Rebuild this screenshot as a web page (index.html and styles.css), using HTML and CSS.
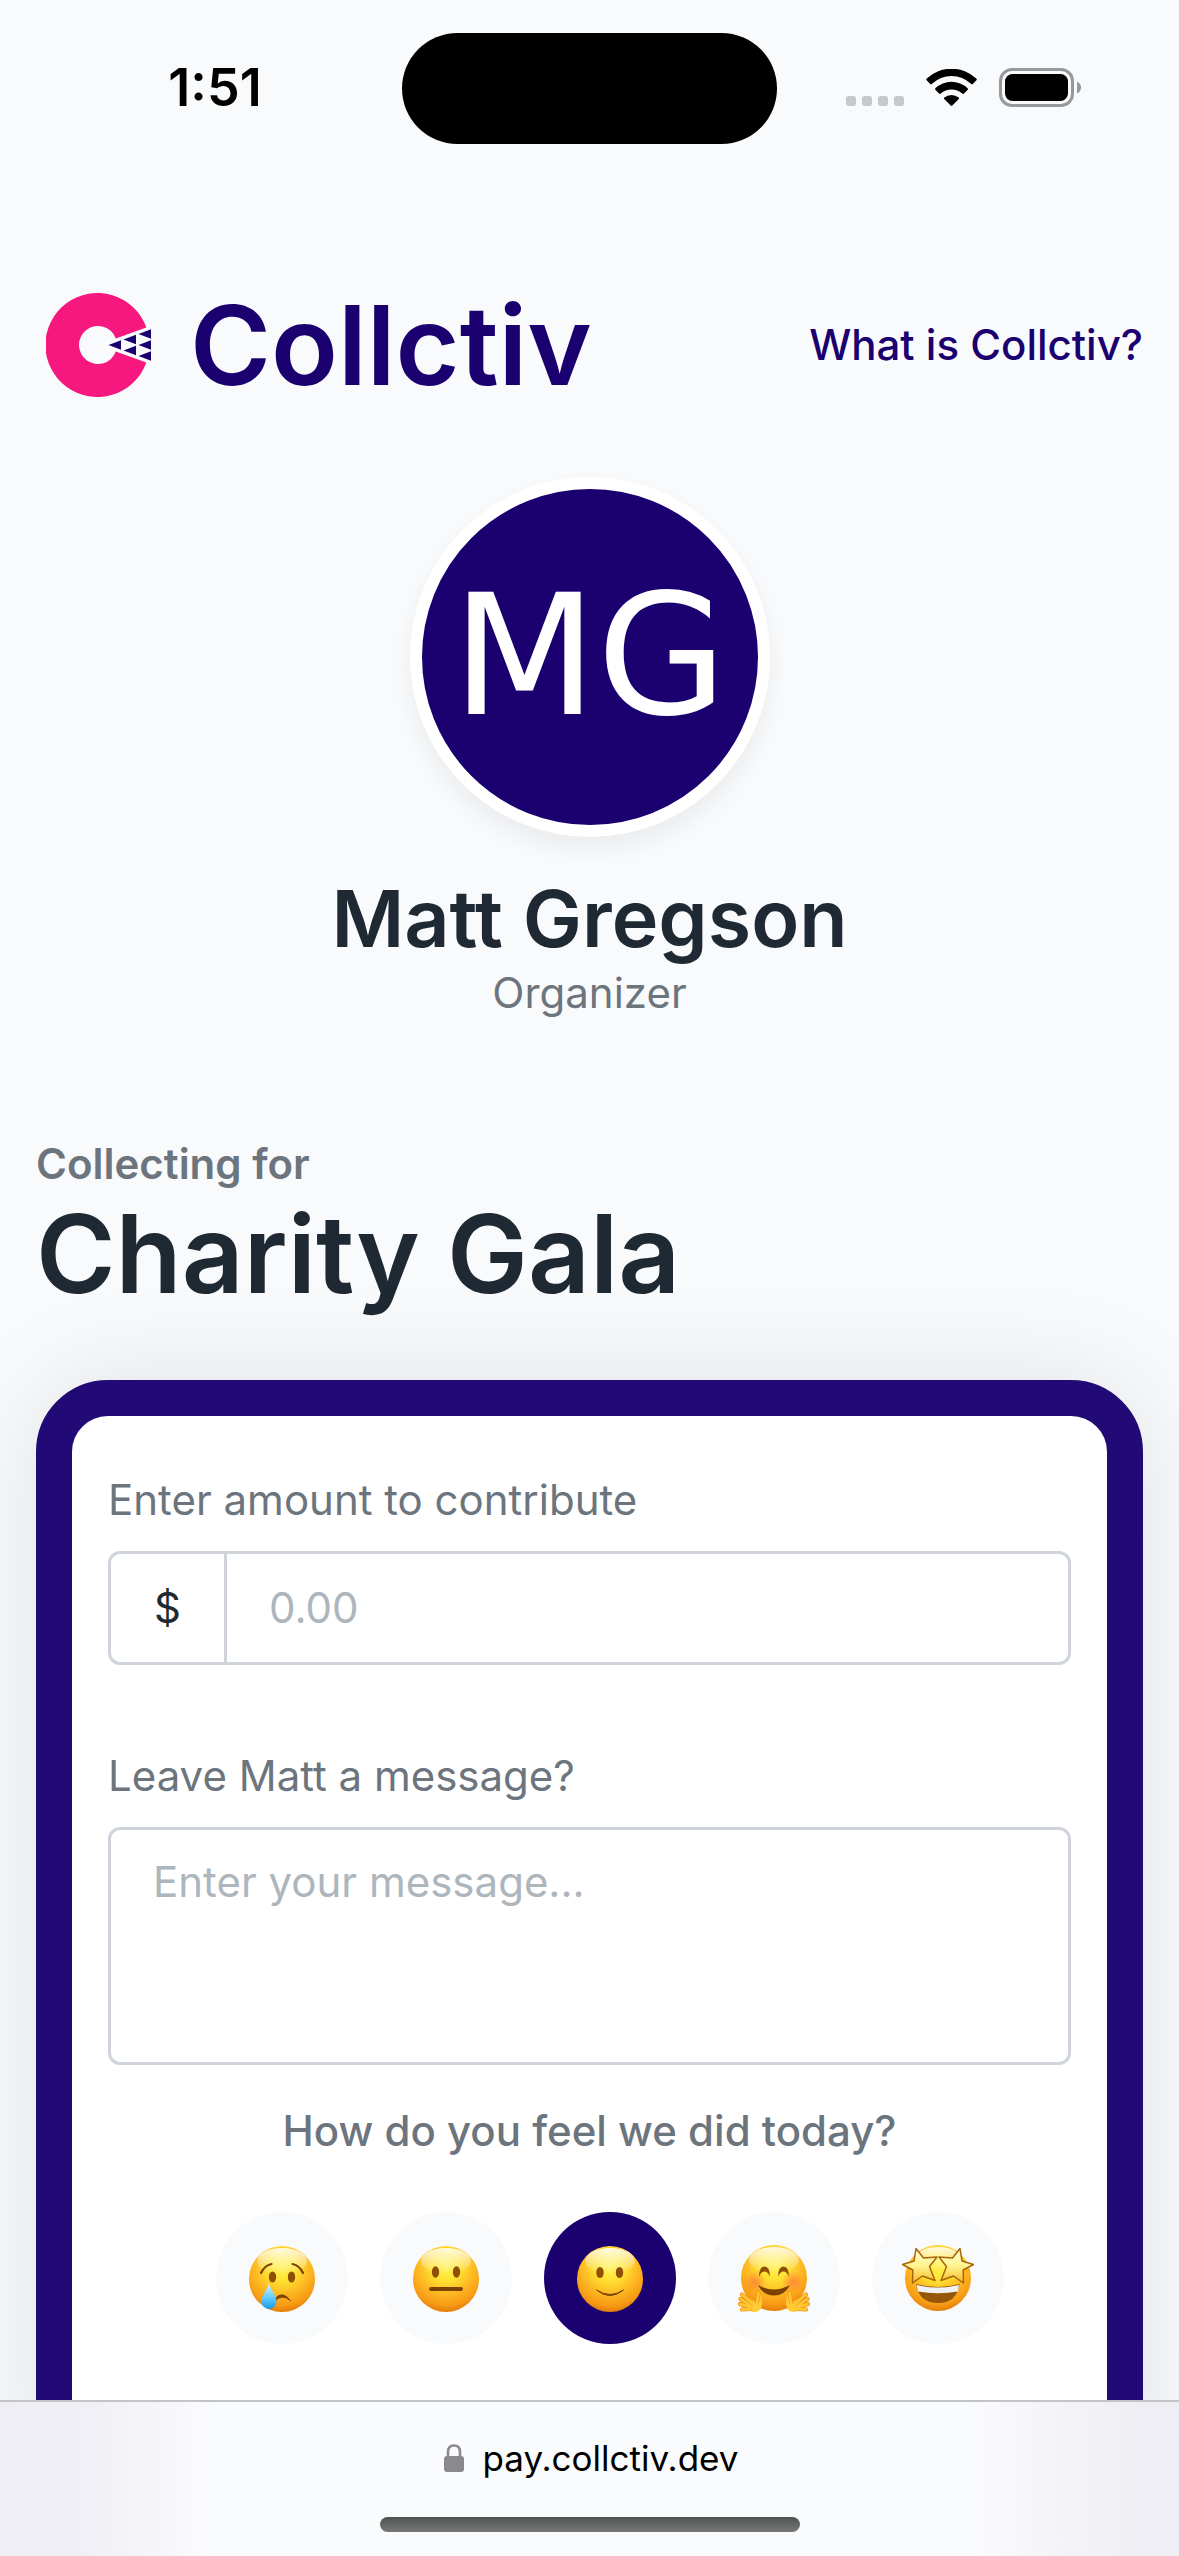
FILE: index.html
```html
<!DOCTYPE html>
<html lang="en">
<head>
<meta charset="utf-8">
<meta name="viewport" content="width=device-width, initial-scale=1">
<title>Charity Gala – Collctiv</title>
<link rel="stylesheet" href="styles.css">
</head>
<body>
<div class="status">
  <div class="status-side"><time class="clock">1:51</time></div>
  <div class="island"></div>
  <div class="status-side status-icons">
    <svg class="signal" viewBox="0 0 58 10" width="58" height="10" fill="#c7c8ca" aria-hidden="true">
      <rect width="10" height="10" rx="3"/><rect x="16" width="10" height="10" rx="3"/><rect x="32" width="10" height="10" rx="3"/><rect x="48" width="10" height="10" rx="3"/>
    </svg>
    <svg viewBox="0 0 51 38" width="51" height="38" aria-hidden="true">
      <path d="M.6 11.2Q-.2 10.4.7 9.6A36 36 0 0 1 50.3 9.6Q51.200 10.400 50.400 11.200L47 14.800Q46 15.800 45 14.800A28 28 0 0 0 6 14.800Q5 15.800 4 14.800Z"/>
      <path d="M9.300 20.800Q8.600 20 9.400 19.200A23.500 23.500 0 0 1 41.600 19.200Q42.400 20 41.700 20.800L38 24.500Q37.200 25.300 36.200 24.500A16 16 0 0 0 14.800 24.500Q13.800 25.300 13 24.500Z"/>
      <path d="M18.200 30Q17.400 29.200 18.300 28.500A11.500 11.500 0 0 1 32.700 28.500Q33.600 29.200 32.800 30L26.300 36.600Q25.500 37.300 24.700 36.600Z"/>
    </svg>
    <svg viewBox="0 0 82 39" width="82" height="39" aria-hidden="true">
      <rect x="1.500" y="1.500" width="72" height="36" rx="11.500" fill="none" stroke="#97989a" stroke-width="3"/>
      <rect x="6" y="6" width="63" height="27" rx="7.500"/>
      <path d="M78 13.500Q82 15.500 82 19.500T78 25.500Z" fill="#97989a"/>
    </svg>
  </div>
</div>

<main class="page">
  <header class="topbar">
    <a class="brand" href="#">
      <svg viewBox="0 0 106 104" width="106" height="104" aria-hidden="true">
        <path fill="#f6187e" fill-rule="evenodd" d="M100.300 34.400A52 52 0 1 0 100.300 69.600L69.800 58.600A19 19 0 1 1 69.800 45.400Z"/>
        <path fill="#1b006f" d="M62.500 52 75 47.200V56.800ZM77.500 46.500 90 41.700V51.300ZM77.500 57.500 90 52.700V62.300ZM92.500 41 105 36.200V45.800ZM92.500 52 105 47.200V56.800ZM92.500 63 105 58.200V67.800Z"/>
      </svg>
      <span class="wordmark">Collctiv</span>
    </a>
    <a class="about" href="#">What is Collctiv?</a>
  </header>

  <section class="organizer">
    <div class="avatar">MG</div>
    <h2 class="name">Matt Gregson</h2>
    <p class="role">Organizer</p>
  </section>

  <section class="intro">
    <p class="eyebrow">Collecting for</p>
    <h1 class="title">Charity Gala</h1>
  </section>

  <form class="card">
    <label class="label" for="amount">Enter amount to contribute</label>
    <div class="amount">
      <span class="currency">$</span>
      <input class="amount-input" id="amount" type="text" inputmode="decimal" placeholder="0.00">
    </div>
    <label class="label" for="message">Leave Matt a message?</label>
    <textarea class="message" id="message" placeholder="Enter your message..."></textarea>
    <fieldset class="rating">
      <legend class="question">How do you feel we did today?</legend>
      <div class="faces">
        <label class="face"><input type="radio" name="feel" aria-label="Sad">
          <svg viewBox="0 0 72 72" width="72" height="72" aria-hidden="true">
            <defs>
              <radialGradient id="skin" cx="50%" cy="30%" r="71%">
                <stop offset="0" stop-color="#fff25a"/><stop offset=".3" stop-color="#ffe433"/><stop offset=".6" stop-color="#fdb922"/><stop offset=".85" stop-color="#f79a14"/><stop offset="1" stop-color="#e07a08"/>
              </radialGradient>
              <linearGradient id="shine" x2="0" y2="1"><stop stop-color="#fff" stop-opacity=".85"/><stop offset="1" stop-color="#fff" stop-opacity="0"/></linearGradient>
              <linearGradient id="tear" x2="0" y2="1"><stop stop-color="#d8f5ff"/><stop offset=".6" stop-color="#5cc8fb"/><stop offset="1" stop-color="#149ae8"/></linearGradient>
              <linearGradient id="star" x2="0" y2="1"><stop stop-color="#fffdd8"/><stop offset=".5" stop-color="#fff58e"/><stop offset="1" stop-color="#f6b928"/></linearGradient>
              <radialGradient id="blush"><stop stop-color="#ff7a3c" stop-opacity=".75"/><stop offset="1" stop-color="#ff7a3c" stop-opacity="0"/></radialGradient>
            </defs>
            <circle cx="36" cy="37" r="33" fill="url(#skin)"/>
            <ellipse cx="36" cy="19" rx="25" ry="13" fill="url(#shine)"/>
            <g fill="#904f06"><ellipse cx="26.500" cy="35" rx="3.700" ry="5.500"/><ellipse cx="45.500" cy="35" rx="3.700" ry="5.500"/></g>
            <g fill="none" stroke="#7c4204" stroke-width="2.200" stroke-linecap="round"><path d="M15 31Q18.500 23.500 25.500 22"/><path d="M57 31Q53.500 23.500 46.500 22"/></g>
            <path d="M29 57Q36 48 44.500 58.500Q36 51.500 29 59Z" fill="#7c4204" stroke="#7c4204"/>
            <path d="M23 41C25 49 30.500 53 30.500 59.500A7.500 7.500 0 0 1 15.500 59.500C15.500 53 21 49 23 41Z" fill="url(#tear)"/>
          </svg></label>
        <label class="face"><input type="radio" name="feel" aria-label="Neutral">
          <svg viewBox="0 0 72 72" width="72" height="72" aria-hidden="true">
            <circle cx="36" cy="37" r="33" fill="url(#skin)"/>
            <ellipse cx="36" cy="19" rx="25" ry="13" fill="url(#shine)"/>
            <g fill="#904f06"><ellipse cx="25.500" cy="30" rx="3.700" ry="5.700"/><ellipse cx="46.500" cy="30" rx="3.700" ry="5.700"/></g>
            <rect x="19" y="45" width="34" height="4" rx="2" fill="#7c4204"/>
          </svg></label>
        <label class="face"><input type="radio" name="feel" aria-label="Happy" checked>
          <svg viewBox="0 0 72 72" width="72" height="72" aria-hidden="true">
            <circle cx="36" cy="37" r="33" fill="url(#skin)"/>
            <ellipse cx="36" cy="19" rx="25" ry="13" fill="url(#shine)"/>
            <g fill="#904f06"><ellipse cx="26" cy="30.500" rx="3.700" ry="5.500"/><ellipse cx="45.500" cy="30.500" rx="3.700" ry="5.500"/></g>
            <path d="M22.500 48Q36 57 49.500 48Q36 59 22.500 48Z" fill="#7c4204" stroke="#7c4204" stroke-linejoin="round"/>
          </svg></label>
        <label class="face"><input type="radio" name="feel" aria-label="Hugging">
          <svg viewBox="0 0 72 72" width="72" height="72" aria-hidden="true">
            <circle cx="36" cy="36" r="33" fill="url(#skin)"/>
            <ellipse cx="36" cy="18" rx="25" ry="13" fill="url(#shine)"/>
            <circle cx="17" cy="40" r="11" fill="url(#blush)"/><circle cx="55" cy="40" r="11" fill="url(#blush)"/>
            <g fill="#904f06"><path d="M21 35Q21 24.500 26.500 24.500T32 35Q30 29.500 26.500 29.500T21 35Z"/><path d="M40 35Q40 24.500 45.500 24.500T51 35Q49 29.500 45.500 29.500T40 35Z"/></g>
            <path d="M20 43Q36 52 52 43Q47 53.500 36 53.500T20 43Z" fill="#7c4204"/>
            <g id="hand"><path d="M21 50Q24 55 24 62Q23 70 16.500 70Q12 70 8 65L12 57L18 60Q18 53 21 50Z" fill="#ffca35"/>
            <g fill="none" stroke="#f0941a" stroke-width="4.200" stroke-linecap="round"><path d="M13 61 4 52.500M11 63 2.500 57M11 65 2 62M12 67 4 67.500M19 60 20.500 51"/></g>
            <g fill="none" stroke="#ffc832" stroke-width="2.600" stroke-linecap="round"><path d="M14 61 4 52.500M12 63 2.500 57M12 65 2 62M14 67 4 67.500M19 61 20.500 51"/></g></g>
            <use href="#hand" transform="matrix(-1 0 0 1 72 0)"/>
          </svg></label>
        <label class="face"><input type="radio" name="feel" aria-label="Star-struck">
          <svg viewBox="0 0 72 72" width="72" height="72" aria-hidden="true">
            <circle cx="36" cy="36" r="33" fill="url(#skin)"/>
            <ellipse cx="36" cy="16" rx="22" ry="11" fill="url(#shine)"/>
            <path d="M14 42Q36 48 57.500 42Q55 61 36 61T14 42Z" fill="#95580a"/>
            <path d="M14.500 43Q36 48 57 43L56 49.500Q36 53 16 49.500Z" fill="#f1f1f5"/>
            <path id="starEye" d="M14 6.500 21.500 16 35 15 27.500 24.500 33 38.500 20.500 34 10.500 41 10.800 28 .500 22.500 12 19Z" fill="url(#star)" stroke="#a8640c" stroke-width="1.500" stroke-linejoin="round"/>
            <use href="#starEye" transform="matrix(-1 0 0 1 72 0)"/>
          </svg></label>
      </div>
    </fieldset>
  </form>
</main>

<footer class="browser">
  <button class="address" type="button">
    <svg viewBox="0 0 20 28" width="20" height="28" aria-hidden="true"><path d="M4 13V8Q4 1.500 10 1.500T16 8V13" fill="none" stroke="#8a8a8e" stroke-width="2.600"/><rect y="12" width="20" height="16" rx="3" fill="#8a8a8e"/></svg>
    <span>pay.collctiv.dev</span>
  </button>
  <div class="home"></div>
</footer>
</body>
</html>
```
FILE: styles.css
```css
:root {
  --navy: #1b006f;
  --page: #f9fafc;
  --ink: #1f2933;
  --muted: #6c757d;
  --line: #ced4da;
}
* { box-sizing: border-box; margin: 0; }
body {
  display: flex;
  flex-direction: column;
  height: 100vh;
  background: var(--page);
  color: var(--ink);
  font: 400 42px/60px Inter, "Liberation Sans", sans-serif;
}
a { color: var(--navy); text-decoration: none; }

/* Device status bar */
.status {
  display: grid;
  grid-template-columns: 1fr auto 1fr;
  align-items: center;
  flex: none;
  height: 177px;
}
.status-side {
  display: flex;
  justify-content: center;
  padding: 0 0 2px 28px;
}
.clock {
  color: #000;
  font-size: 52px;
  font-weight: 600;
}
.island {
  width: 375px;
  height: 111px;
  border-radius: 56px;
  background: #000;
}
.status-icons {
  justify-content: flex-end;
  align-items: center;
  gap: 22px;
  padding-right: 98px;
}
.signal {
  align-self: flex-end;
  margin-bottom: 1px;
}

/* Page */
.page {
  flex: 1;
  min-height: 0;
  display: flex;
  flex-direction: column;
  padding: 108px 36px 0;
  overflow: hidden;
}
.topbar {
  display: flex;
  align-items: center;
  justify-content: space-between;
  flex: none;
  height: 120px;
}
.brand {
  display: flex;
  align-items: center;
  gap: 38px;
  padding-left: 10px;
}
.wordmark {
  font-size: 110px;
  font-weight: 600;
  line-height: 120px;
}
.about { font-weight: 500; }

.organizer {
  display: flex;
  flex-direction: column;
  align-items: center;
  padding-top: 72px;
}
.avatar {
  width: 360px;
  height: 360px;
  border: 12px solid #fff;
  border-radius: 50%;
  background: var(--navy);
  box-shadow: 0 12px 24px rgba(0, 0, 0, .06);
  color: #fff;
  font: 168px/334px "DejaVu Sans", sans-serif;
  text-align: center;
}
.name {
  margin-top: 36px;
  font-size: 79px;
  font-weight: 600;
  line-height: 90px;
}
.role { color: var(--muted); }

.intro { padding-top: 111px; }
.eyebrow {
  color: var(--muted);
  font-weight: 600;
}
.title {
  font-size: 108px;
  font-weight: 600;
  line-height: 120px;
}

/* Contribution form */
.card {
  flex: none;
  display: flex;
  flex-direction: column;
  margin-top: 66px;
  padding: 54px 36px 120px;
  border: 36px solid #210a75;
  border-radius: 72px;
  background: #fff;
  box-shadow: 0 0 108px rgba(0, 0, 0, .1);
}
.label {
  margin-bottom: 21px;
  color: var(--muted);
}
.amount {
  display: flex;
  height: 114px;
  margin-bottom: 81px;
  border: 3px solid var(--line);
  border-radius: 12px;
}
.currency {
  display: flex;
  align-items: center;
  justify-content: center;
  width: 116px;
  border-right: 3px solid var(--line);
}
.amount-input {
  flex: 1;
  min-width: 0;
  padding: 0 42px;
  border: 0;
  background: none;
  color: inherit;
  font: inherit;
}
.message {
  height: 238px;
  padding: 22px 42px;
  border: 3px solid var(--line);
  border-radius: 12px;
  background: none;
  color: inherit;
  font: inherit;
  resize: none;
}
::placeholder { color: #adb5bd; opacity: 1; }

.rating {
  min-width: 0;
  padding: 36px 0 0;
  border: 0;
}
.question {
  float: left;
  width: 100%;
  padding: 0;
  color: var(--muted);
  font-weight: 500;
  text-align: center;
}
.faces {
  clear: both;
  display: flex;
  justify-content: center;
  gap: 32px;
  padding: 51px 0 0 40px;
}
.face {
  position: relative;
  display: grid;
  place-items: center;
  width: 132px;
  height: 132px;
  border-radius: 50%;
  background: var(--page);
}
.face input {
  position: absolute;
  inset: 0;
  width: 100%;
  height: 100%;
  margin: 0;
  opacity: 0;
}
.face:has(:checked) { background: var(--navy); }

/* Browser bar */
.browser {
  flex: none;
  display: flex;
  flex-direction: column;
  align-items: center;
  height: 156px;
  padding-top: 26px;
  border-top: 2px solid #c3c4c8;
  background: linear-gradient(90deg, #efeef4, #f1f0f6 8%, #fafbfd 18%, #fafbfc 82%, #efeef4 97%);
}
.address {
  display: flex;
  align-items: center;
  gap: 18px;
  padding: 0 0 0 4px;
  border: 0;
  background: none;
  color: #000;
  font: 400 35px/60px Inter, "Liberation Sans", sans-serif;
}
.home {
  width: 420px;
  height: 15px;
  margin-top: 29px;
  border-radius: 8px;
  background: linear-gradient(#505252, #777);
}
```
